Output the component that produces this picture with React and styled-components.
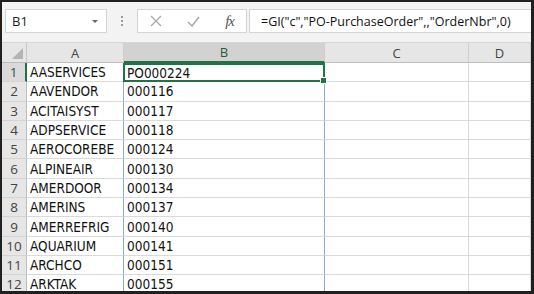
import React from 'react';
import styled, { createGlobalStyle } from 'styled-components';

const GlobalStyle = createGlobalStyle`
  html, body {
    margin: 0;
    padding: 0;
    background: #1e1e1e;
  }
`;

const GREEN = '#217346';
const ROW_H = 19.3;

const rows = [
  ['AASERVICES', 'PO000224'],
  ['AAVENDOR', '000116'],
  ['ACITAISYST', '000117'],
  ['ADPSERVICE', '000118'],
  ['AEROCOREBE', '000124'],
  ['ALPINEAIR', '000130'],
  ['AMERDOOR', '000134'],
  ['AMERINS', '000137'],
  ['AMERREFRIG', '000140'],
  ['AQUARIUM', '000141'],
  ['ARCHCO', '000151'],
  ['ARKTAK', '000155'],
];

const Frame = styled.div`
  box-sizing: border-box;
  width: 534px;
  height: 294px;
  border-style: solid;
  border-color: #202020;
  border-width: 2px 3px 3px 2px;
  background: #fff;
  overflow: hidden;
  display: flex;
  flex-direction: column;
`;

const Toolbar = styled.div`
  display: flex;
  align-items: center;
  height: 41px;
  box-sizing: border-box;
  padding: 0 0 2px 3px;
  background: #f3f3f3;
  border-bottom: 1px solid #d6d6d6;
  flex-shrink: 0;
`;

const Box = styled.div`
  box-sizing: border-box;
  height: 24px;
  background: #fff;
  border: 1px solid #d4d4d4;
  display: flex;
  align-items: center;
`;

const NameBox = styled(Box)`
  width: 102px;
  padding: 0 8px 0 6px;
  justify-content: space-between;
  font-family: "Open Sans", "Noto Sans", sans-serif;
  font-size: 13px;
  color: #222;
`;

const Caret = styled.span`
  width: 0;
  height: 0;
  border-left: 3px solid transparent;
  border-right: 3px solid transparent;
  border-top: 3px solid #666;
`;

const Grip = styled.div`
  width: 30px;
  display: flex;
  flex-direction: column;
  align-items: center;
  gap: 2px;
  span {
    width: 2px;
    height: 2px;
    background: #9a9a9a;
  }
`;

const FxBox = styled(Box)`
  width: 110px;
  margin-right: 2px;
  justify-content: space-between;
  padding: 0 12px 0 12px;
  color: #9e9e9e;
`;

const Fx = styled.span`
  font-family: "Liberation Serif", serif;
  font-style: italic;
  font-size: 15px;
  color: #555;
  letter-spacing: -1px;
`;

const FormulaBox = styled(Box)`
  flex: 1;
  border-right: none;
  padding-left: 11px;
  font-family: "Open Sans", "Noto Sans", sans-serif;
  font-size: 12.5px;
  color: #111;
  white-space: nowrap;
`;

const Sheet = styled.div`
  display: grid;
  grid-template-columns: 25px 97px 201px 144px 1fr;
  grid-template-rows: 20px;
  grid-auto-rows: ${ROW_H}px;
  flex: 1;
`;

const Corner = styled.div`
  background: #e6e6e6;
  border-right: 1px solid #c8c8c8;
  border-bottom: 1px solid #bdbdbd;
  box-sizing: border-box;
  position: relative;
  &::after {
    content: '';
    position: absolute;
    right: 3px;
    bottom: 3px;
    width: 0;
    height: 0;
    border-left: 11px solid transparent;
    border-bottom: 11px solid #b4b4b4;
  }
`;

const ColHead = styled.div`
  box-sizing: border-box;
  background: ${p => (p.$active ? '#d2d2d2' : '#e6e6e6')};
  border-right: 1px solid #cfcfcf;
  border-bottom: ${p => (p.$active ? `2px solid ${GREEN}` : '1px solid #bdbdbd')};
  display: flex;
  align-items: center;
  justify-content: center;
  font-family: "Open Sans", "Noto Sans", sans-serif;
  font-size: 13px;
  color: ${p => (p.$active ? '#1d5e3a' : '#444')};
`;

const RowHead = styled.div`
  box-sizing: border-box;
  background: ${p => (p.$active ? '#dadada' : '#e6e6e6')};
  border-right: ${p => (p.$active ? `2px solid ${GREEN}` : '1px solid #bdbdbd')};
  border-bottom: 1px solid #d4d4d4;
  display: flex;
  align-items: center;
  justify-content: center;
  font-family: "Open Sans", "Noto Sans", sans-serif;
  font-size: 13.5px;
  color: ${p => (p.$active ? '#1d5e3a' : '#444')};
`;

const Cell = styled.div`
  box-sizing: border-box;
  border-right: 1px solid #dadada;
  border-bottom: 1px solid #dadada;
  display: flex;
  align-items: center;
  padding-left: 3px;
  font-family: "Liberation Sans Narrow", "DejaVu Sans Condensed", Lato, sans-serif;
  font-size: 13.5px;
  color: #111;
  white-space: nowrap;
  overflow: visible;
  position: relative;
  ${p => p.$ranged && `
    border-left: 1px solid #8eaadb;
    border-right: 1px solid #8eaadb;
    margin-left: -1px;
  `}
  ${p => p.$selected && `
    border: 2px solid ${GREEN};
    margin-left: -1px;
    padding-left: 2px;
  `}
`;

const Handle = styled.span`
  position: absolute;
  right: -4px;
  bottom: -4px;
  width: 5px;
  height: 5px;
  background: ${GREEN};
  border: 1px solid #fff;
  z-index: 2;
`;

const XIcon = () => (
  <svg width="12" height="12" viewBox="0 0 12 12">
    <path d="M1 1 L11 11 M11 1 L1 11" stroke="#a6a6a6" strokeWidth="1.2" fill="none" />
  </svg>
);

const CheckIcon = () => (
  <svg width="13" height="11" viewBox="0 0 13 11">
    <path d="M1 6 L5 10 L12 1" stroke="#a6a6a6" strokeWidth="1.4" fill="none" />
  </svg>
);

export default function App() {
  return (
    <>
      <GlobalStyle />
      <Frame>
        <Toolbar>
          <NameBox>
            <span>B1</span>
            <Caret />
          </NameBox>
          <Grip>
            <span />
            <span />
            <span />
          </Grip>
          <FxBox>
            <XIcon />
            <CheckIcon />
            <Fx>fx</Fx>
          </FxBox>
          <FormulaBox>=GI("c","PO-PurchaseOrder",,"OrderNbr",0)</FormulaBox>
        </Toolbar>
        <Sheet>
          <Corner />
          <ColHead>A</ColHead>
          <ColHead $active>B</ColHead>
          <ColHead>C</ColHead>
          <ColHead>D</ColHead>
          {rows.map(([a, b], i) => (
            <React.Fragment key={a}>
              <RowHead $active={i === 0}>{i + 1}</RowHead>
              <Cell>{a}</Cell>
              {i === 0 ? (
                <Cell $selected>
                  {b}
                  <Handle />
                </Cell>
              ) : (
                <Cell $ranged>{b}</Cell>
              )}
              <Cell />
              <Cell />
            </React.Fragment>
          ))}
        </Sheet>
      </Frame>
    </>
  );
}
